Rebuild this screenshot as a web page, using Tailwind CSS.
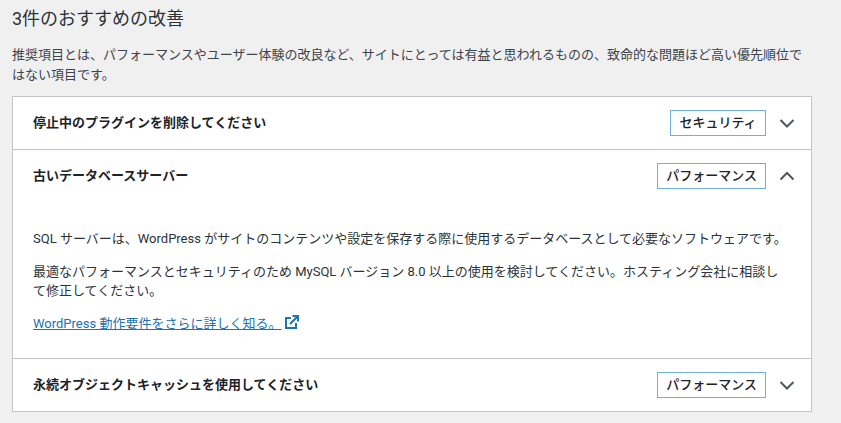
<!DOCTYPE html>
<html lang="ja">
<head>
    <meta charset="UTF-8">
    <title>サイトヘルス</title>
    <script src="https://cdn.jsdelivr.net/npm/@tailwindcss/browser@4"></script>
</head>
<body class="bg-[#f0f0f1] text-[#1d2327] text-[13px] leading-[19.5px] font-['Roboto','Noto_Sans_CJK_JP',sans-serif] h-[423px] overflow-hidden">
    <div class="w-[800px] ml-3">
        <h3 class="text-[18px] leading-[24px] font-normal pt-[7px] text-[#2c3338]">3件のおすすめの改善</h3>
        <p class="mt-[14px] text-[#3c434a]">推奨項目とは、パフォーマンスやユーザー体験の改良など、サイトにとっては有益と思われるものの、致命的な問題ほど高い優先順位ではない項目です。</p>

        <div class="mt-[12px] bg-white border border-[#c3c4c7]">
            <div class="h-[53px] flex items-center pl-[20px] pr-[15px] border-b border-[#c3c4c7]">
                <span class="flex-1 font-bold">停止中のプラグインを削除してください</span>
                <span class="h-[26px] w-[96px] justify-center flex items-center border border-[#72aee6] font-medium">セキュリティ</span>
                <svg class="ml-[12px] w-[18px] h-[18px] text-[#50575e]" viewBox="0 0 18 18" fill="none" stroke="currentColor" stroke-width="2"><path d="M2.500 6l6.500 6.500L15.500 6"/></svg>
            </div>
            <div class="h-[52px] flex items-center pl-[20px] pr-[15px]">
                <span class="flex-1 font-bold">古いデータベースサーバー</span>
                <span class="h-[26px] px-[8px] flex items-center border border-[#72aee6] font-medium">パフォーマンス</span>
                <svg class="ml-[12px] w-[18px] h-[18px] text-[#50575e]" viewBox="0 0 18 18" fill="none" stroke="currentColor" stroke-width="2"><path d="M2.500 12.500L9 6l6.500 6.500"/></svg>
            </div>
            <div class="h-[157px] pl-[20px] pr-[20px] pt-[27px] border-b border-[#c3c4c7] text-[#2c3338]">
                <p>SQL サーバーは、WordPress がサイトのコンテンツや設定を保存する際に使用するデータベースとして必要なソフトウェアです。</p>
                <p class="mt-[13px]">最適なパフォーマンスとセキュリティのため MySQL バージョン 8.0 以上の使用を検討してください。ホスティング会社に相談し<br>て修正してください。</p>
                <p class="mt-[13px] flex items-center">
                    <a href="#" class="text-[#2271b1] underline">WordPress 動作要件をさらに詳しく知る。</a>
                    <svg class="ml-[4px] -mt-[2px] w-[14px] h-[14px] text-[#2271b1]" viewBox="0 0 14 14" fill="none" stroke="currentColor" stroke-width="2"><path d="M6 3H1v10h10V8"/><path d="M5 9l7.500-7.500M7.500 1H13v5.500"/></svg>
                </p>
            </div>
            <div class="h-[52px] flex items-center pl-[20px] pr-[15px]">
                <span class="flex-1 font-bold">永続オブジェクトキャッシュを使用してください</span>
                <span class="h-[26px] px-[8px] flex items-center border border-[#72aee6] font-medium">パフォーマンス</span>
                <svg class="ml-[12px] w-[18px] h-[18px] text-[#50575e]" viewBox="0 0 18 18" fill="none" stroke="currentColor" stroke-width="2"><path d="M2.500 6l6.500 6.500L15.500 6"/></svg>
            </div>
        </div>
    </div>
</body>
</html>
